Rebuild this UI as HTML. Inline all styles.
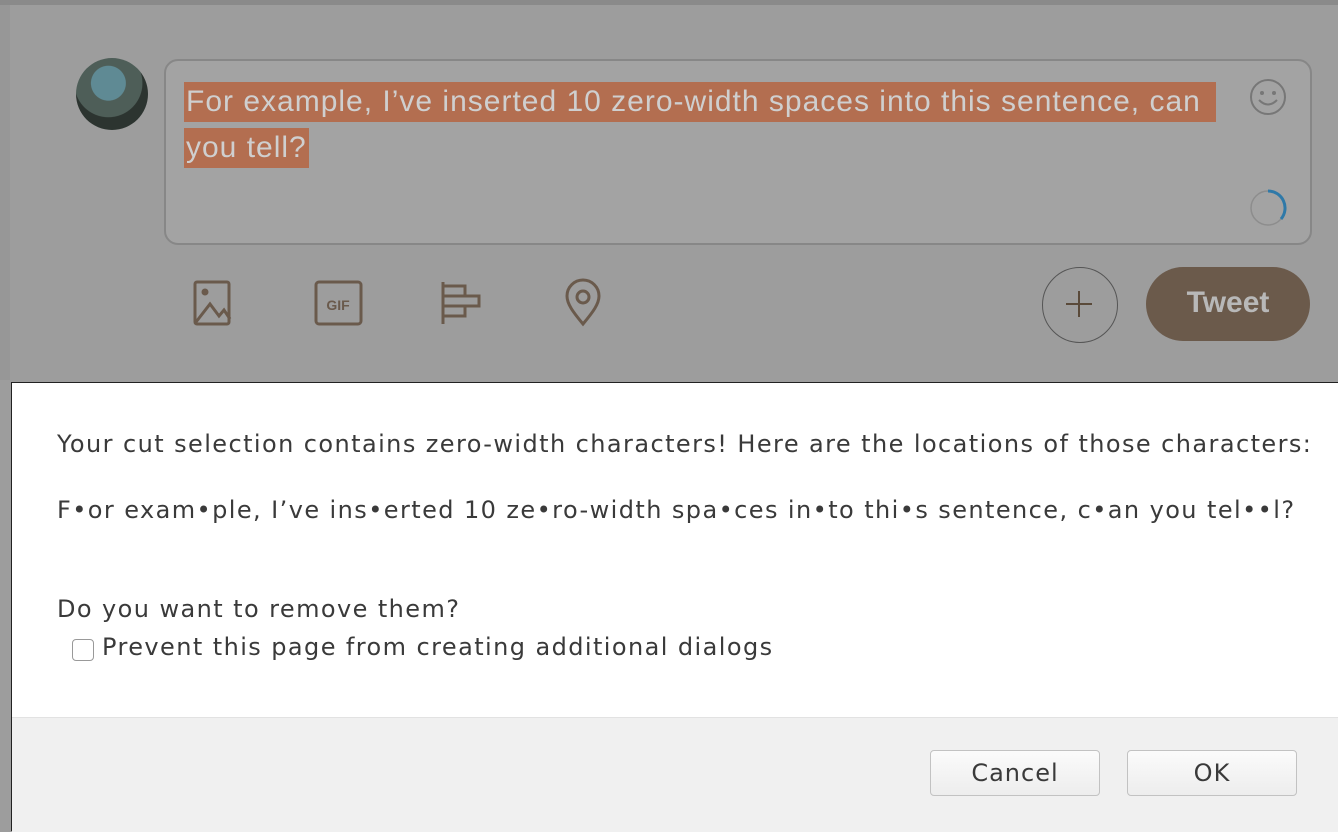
<!DOCTYPE html>
<html><head><meta charset="utf-8"><style>
body{margin:0;width:1338px;height:830px;overflow:hidden;background:#9d9d9d;position:relative;font-family:"Liberation Sans",sans-serif}
.top{position:absolute;left:0;top:0;width:1338px;height:5px;background:#8a8a8a}
.lstrip{position:absolute;left:0;top:5px;width:10px;height:375px;background:#979797}
.avatar{position:absolute;left:76px;top:58px;width:72px;height:72px;border-radius:50%;background:radial-gradient(circle at 45% 35%,#5f8a94 0 28%,#4e5e58 29% 55%,#2c3430 56%)}
.box{position:absolute;left:164px;top:59px;width:1144px;height:182px;border:2px solid #878787;border-radius:14px;background:#a3a3a3}
.sel{position:absolute;font-size:30px;letter-spacing:1px;color:#cfcfcf;background:#b36e50;line-height:40px;padding:0 2px;white-space:nowrap}
.dlg{position:absolute;left:11px;top:382px;width:1327px;height:448px;background:#fff;border-top:1px solid #222;border-left:1px solid #222}
.dlg p{position:absolute;left:45px;margin:0;font-family:"DejaVu Sans",sans-serif;font-size:24px;letter-spacing:1.42px;color:#3a3a3a;white-space:nowrap}
.foot{position:absolute;left:0;top:334px;width:1327px;height:114px;background:#f0f0f0;border-top:1px solid #e2e2e2}
.btn{position:absolute;top:32px;width:168px;height:44px;border:1px solid #c2c2c2;border-radius:4px;background:linear-gradient(#fbfbfb,#ededed);font-family:"DejaVu Sans",sans-serif;font-size:24px;letter-spacing:1px;color:#3a3a3a;text-align:center;line-height:44px}
</style></head><body>
<div class="top"></div><div class="lstrip"></div>
<div class="avatar"></div>
<div class="box"></div>
<div class="sel" style="left:184px;top:82px;width:1028px">For example, I’ve inserted 10 zero-width spaces into this sentence, can</div>
<div class="sel" style="left:184px;top:128px">you tell?</div>
<svg style="position:absolute;left:1248px;top:78px" width="40" height="40"><circle cx="20" cy="19" r="17" fill="none" stroke="#777" stroke-width="2"/><circle cx="14" cy="15" r="2" fill="#777"/><circle cx="26" cy="15" r="2" fill="#777"/><path d="M11 22q9 9 18 0" fill="none" stroke="#777" stroke-width="2"/></svg>
<svg style="position:absolute;left:1248px;top:188px" width="40" height="40"><circle cx="20" cy="20" r="17" fill="none" stroke="#8d8d8d" stroke-width="1.5"/><path d="M20 3a17 17 0 0 1 13 28" fill="none" stroke="#2f79a8" stroke-width="3"/></svg>
<svg style="position:absolute;left:190px;top:278px" width="420" height="50" fill="none" stroke="#6a5a4c" stroke-width="3">
<rect x="5" y="4" width="34" height="42" rx="2"/><circle cx="15" cy="14" r="2" fill="#6a5a4c"/><path d="M6 44l14-18 9 12 5-6 6 9"/>
<rect x="126" y="4" width="45" height="42" rx="3"/><text x="148" y="32" font-size="14" font-weight="bold" fill="#6a5a4c" stroke="none" text-anchor="middle" font-family="Liberation Sans">GIF</text>
<path d="M253 4v42M253 8h22v10h-22M253 18h36v10h-36M253 28h22v10h-22"/>
<path d="M393 46c-10-12-16-20-16-28a16 16 0 0 1 32 0c0 8-6 16-16 28z"/><circle cx="393" cy="19" r="6"/></svg>
<div style="position:absolute;left:1042px;top:267px;width:74px;height:74px;border:1.5px solid #555;border-radius:50%"></div>
<div style="position:absolute;left:1066px;top:303px;width:26px;height:2px;background:#5a4a3a"></div>
<div style="position:absolute;left:1078px;top:291px;width:2px;height:26px;background:#5a4a3a"></div>
<div style="position:absolute;left:1146px;top:267px;width:164px;height:74px;border-radius:37px;background:#6b5a4b;color:#b8b8b8;font-weight:bold;font-size:30px;text-align:center;line-height:72px">Tweet</div>
<div class="dlg">
<p style="top:47px">Your cut selection contains zero-width characters! Here are the locations of those characters:</p>
<p style="top:113px">F•or exam•ple, I’ve ins•erted 10 ze•ro-width spa•ces in•to thi•s sentence, c•an you tel••l?</p>
<p style="top:212px">Do you want to remove them?</p>
<div style="position:absolute;left:60px;top:256px;width:20px;height:20px;border:1px solid #999;border-radius:4px"></div>
<p style="top:250px;left:90px">Prevent this page from creating additional dialogs</p>
<div class="foot"><div class="btn" style="left:918px">Cancel</div><div class="btn" style="left:1115px">OK</div></div>
</div>
</body></html>
